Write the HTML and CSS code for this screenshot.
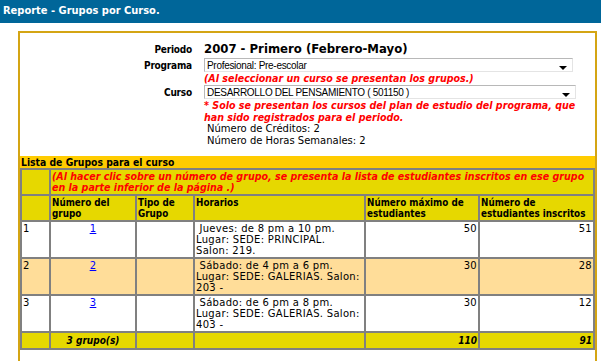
FILE: index.html
```html
<!DOCTYPE html>
<html lang="es">
<head>
<meta charset="utf-8">
<title>Reporte - Grupos por Curso.</title>
<link rel="stylesheet" href="styles.css">
</head>
<body>
<div class="topbar">Reporte - Grupos por Curso.</div>
<div class="panel">
  <div class="form">
    <div class="lbl">Periodo</div>
    <div class="val periodo">2007 - Primero (Febrero-Mayo)</div>
    <div class="lbl">Programa</div>
    <div class="val"><div class="sel sel1"><span>Profesional: Pre-escolar</span><i class="arrow"></i></div></div>
    <div class="lbl"></div>
    <div class="val note note1">(Al seleccionar un curso se presentan los grupos.)</div>
    <div class="lbl">Curso</div>
    <div class="val"><div class="sel sel2"><span>DESARROLLO DEL PENSAMIENTO ( 501150 )</span><i class="arrow"></i></div></div>
    <div class="lbl"></div>
    <div class="val note">* Solo se presentan los cursos del plan de estudio del programa, que<br>han sido registrados para el periodo.</div>
    <div class="lbl"></div>
    <div class="val info">Número de Créditos: 2<br>Número de Horas Semanales: 2</div>
  </div>
  <div class="strip">Lista de Grupos para el curso</div>
  <table class="grid">
    <colgroup>
      <col class="c1"><col class="c2"><col class="c3"><col class="c4"><col class="c5"><col class="c6">
    </colgroup>
    <tr class="yel">
      <td></td>
      <td colspan="5" class="tnote">(Al hacer clic sobre un número de grupo, se presenta la lista de estudiantes inscritos en ese grupo<br>en la parte inferior de la página .)</td>
    </tr>
    <tr class="yel head">
      <td></td>
      <td>Número del grupo</td>
      <td>Tipo de Grupo</td>
      <td>Horarios</td>
      <td>Número máximo de estudiantes</td>
      <td>Número de estudiantes inscritos</td>
    </tr>
    <tr class="row">
      <td>1</td>
      <td class="ctr"><a href="#">1</a></td>
      <td></td>
      <td>&nbsp;Jueves: de 8 pm a 10 pm.<br>Lugar: SEDE: PRINCIPAL.<br>Salon: 219.</td>
      <td class="num">50</td>
      <td class="num">51</td>
    </tr>
    <tr class="row alt">
      <td>2</td>
      <td class="ctr"><a href="#">2</a></td>
      <td></td>
      <td>&nbsp;Sábado: de 4 pm a 6 pm.<br>Lugar: SEDE: GALERIAS. Salon:<br>203 -</td>
      <td class="num">30</td>
      <td class="num">28</td>
    </tr>
    <tr class="row">
      <td>3</td>
      <td class="ctr"><a href="#">3</a></td>
      <td></td>
      <td>&nbsp;Sábado: de 6 pm a 8 pm.<br>Lugar: SEDE: GALERIAS. Salon:<br>403 -</td>
      <td class="num">30</td>
      <td class="num">12</td>
    </tr>
    <tr class="yel foot">
      <td></td>
      <td class="ctr">3 grupo(s)</td>
      <td></td>
      <td></td>
      <td class="num">110</td>
      <td class="num">91</td>
    </tr>
  </table>
</div>
</body>
</html>
```
FILE: styles.css
```css
body {
  margin: 0;
  background: #ffffff;
  color: #000000;
  font-family: "DejaVu Sans Condensed", "DejaVu Sans", sans-serif;
  font-size: 11px;
}
.topbar {
  background: #006699;
  color: #ffffff;
  font-weight: bold;
  font-size: 11px;
  height: 23px;
  line-height: 22px;
  padding-left: 3px;
}
.panel {
  margin: 8px 0 0 18px;
  width: 575px;
  border: 2px solid #d4a514;
  border-bottom: none;
  padding-bottom: 40px;
}
.form {
  display: grid;
  grid-template-columns: 172px 1fr;
  column-gap: 12px;
  padding-top: 7px;
  padding-bottom: 9px;
  align-items: center;
}
.lbl {
  text-align: right;
  font-weight: bold;
  font-size: 10px;
  letter-spacing: -0.2px;
}
.periodo {
  font-weight: bold;
  font-size: 13px;
  line-height: 18px;
}
.sel {
  display: flex;
  align-items: center;
  box-sizing: border-box;
  height: 14px;
  border: 1px solid #b8b8b8;
  border-bottom-color: #e4e4e4;
  border-right-color: #e4e4e4;
  background: #fff;
  font-family: "Liberation Sans", Arial, sans-serif;
  font-size: 10px;
  letter-spacing: -0.3px;
  padding-left: 2px;
}
.sel1 { width: 369px; }
.sel2 { width: 372px; }
.arrow {
  margin-left: auto;
  margin-right: 5px;
  width: 0;
  height: 0;
  border-left: 4px solid transparent;
  border-right: 4px solid transparent;
  border-top: 4px solid #000;
  margin-top: 5px;
}
.note {
  color: #ff0000;
  font-weight: bold;
  font-style: italic;
  font-size: 10.6px;
  line-height: 12px;
}
.note1 { line-height: 13px; }
.info {
  font-family: "DejaVu Sans", sans-serif;
  font-size: 10px;
  padding-left: 3px;
  line-height: 12px;
}
.strip {
  background: #ffcc00;
  font-weight: bold;
  font-size: 10.3px;
  line-height: 12px;
  padding-left: 1px;
}
.grid {
  width: 575px;
  border-collapse: separate;
  border-spacing: 0;
  border: 1px solid #808080;
  table-layout: fixed;
  font-family: "DejaVu Sans", sans-serif;
  font-size: 10px;
  letter-spacing: 0.3px;
}
.c1 { width: 29px; }
.c2 { width: 86px; }
.c3 { width: 58px; }
.c4 { width: 171px; }
.c5 { width: 114px; }
.c6 { width: 115px; }
.grid td {
  border: 1px solid #808080;
  padding: 1px 1px;
  vertical-align: top;
  line-height: 11px;
}
.yel td { background: #e6d800; }
.tnote {
  color: #ff0000;
  font-family: "DejaVu Sans Condensed", "DejaVu Sans", sans-serif;
  font-weight: bold;
  font-style: italic;
  font-size: 10.6px;
  letter-spacing: 0;
}
.head td {
  font-family: "DejaVu Sans Condensed", "DejaVu Sans", sans-serif;
  font-weight: bold;
  font-size: 9.8px;
  letter-spacing: 0;
}
.row td { background: #ffffff; height: 33px; }
.row.alt td { background: #ffdd99; }
.foot td {
  font-family: "DejaVu Sans Condensed", "DejaVu Sans", sans-serif;
  font-weight: bold;
  font-style: italic;
  letter-spacing: 0;
  height: 13px;
  line-height: 13px;
}
.ctr { text-align: center; }
.num { text-align: right; }
.grid a { color: #0000ff; }
```
